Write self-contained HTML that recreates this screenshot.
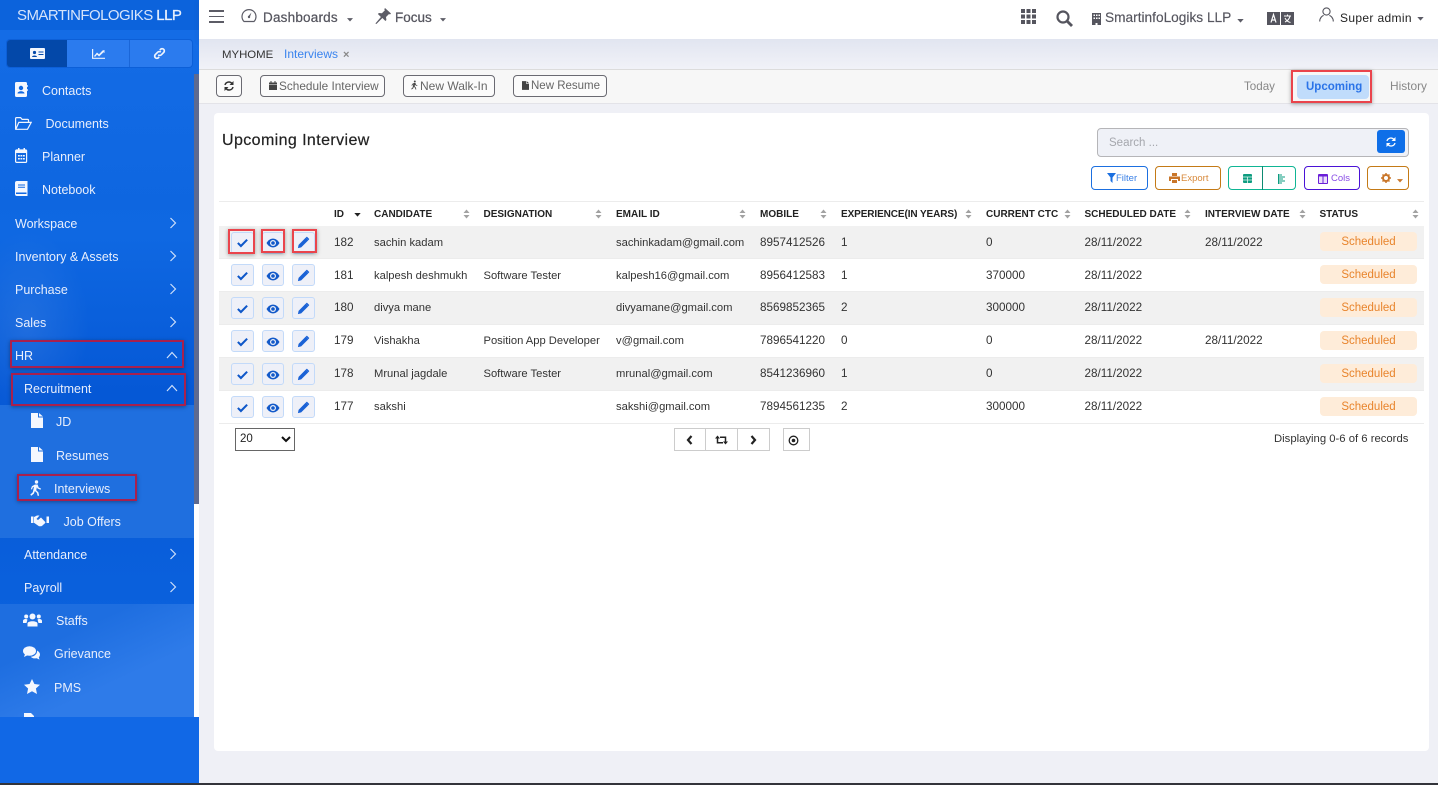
<!DOCTYPE html>
<html><head><meta charset="utf-8"><title>Interviews</title>
<style>
html,body{margin:0;padding:0;width:1438px;height:785px;overflow:hidden;background:#eff0f6;font-family:"Liberation Sans",sans-serif;color:#333}
*{box-sizing:border-box}
.a{position:absolute}
.t{position:absolute;white-space:nowrap;line-height:14px;font-size:12px}
.s{color:#e8eefc;font-size:12.5px}
.s2{color:#e8eefc;font-size:12.5px}
svg{position:absolute;display:block}
.red{position:absolute;border:2px solid #a8204e;box-shadow:0 1px 4px rgba(0,0,0,.35)}
.red2{position:absolute;border:2px solid #ea444c;box-shadow:0 1px 4px rgba(0,0,0,.35)}
.tb{position:absolute;top:75px;height:22px;border:1px solid #6a6a72;border-radius:4px;background:#fbfbfb;color:#666;font-size:11.8px;line-height:20px;white-space:nowrap}
.th{position:absolute;top:209px;font-size:10px;font-weight:bold;color:#222;line-height:12px;white-space:nowrap}
.b{position:absolute;width:23px;height:22px;background:#eef0f8;border:1px solid #c3daf9;border-radius:3px}
.bd{position:absolute;left:1320px;width:97px;height:19px;background:#feecd9;border-radius:4px;color:#e8842c;font-size:11.5px;line-height:21px;text-align:center}
.row{position:absolute;left:219px;width:1205px;height:33px;border-bottom:1px solid #ececec}
.g{background:#f1f1f1}
.c{position:absolute;font-size:11.2px;color:#333;line-height:16px;white-space:nowrap}
.n{position:absolute;font-size:11.7px;color:#333;line-height:16px;white-space:nowrap}
.tl{position:absolute;top:166px;height:24px;border-radius:4px;background:#fff;font-size:9.5px;line-height:24px;white-space:nowrap}
</style></head><body>
<svg width="0" height="0" style="position:absolute"><defs>
<symbol id="check" viewBox="0 0 14 14"><path d="M2 7.5l3.3 3.3L12 4" fill="none" stroke="#0e57c9" stroke-width="2.2"/></symbol>
<symbol id="eye" viewBox="0 0 14 14"><path d="M0.5 7C2.500 3.700 4.700 2.600 7 2.600S11.500 3.700 13.500 7C11.500 10.300 9.300 11.400 7 11.400S2.500 10.300 0.500 7Z" fill="#1259c9"/><circle cx="7" cy="7" r="3" fill="#eef0f8"/><circle cx="7" cy="7" r="1.800" fill="#1259c9"/></symbol>
<symbol id="pen" viewBox="0 0 14 14"><path d="M1 13l.7-3.500L9.400 1.800l2.800 2.800-7.700 7.700zM10.200 1l.6-.2 2.400 2.400-.3.700-.6.600-2.800-2.800z" fill="#1a62d6"/></symbol>
<symbol id="sort" viewBox="0 0 7 10"><path d="M3.500 0.500L6.500 4H.5zM3.500 9.500L.5 6h6z" fill="#a2a2a2"/></symbol>
<symbol id="chev" viewBox="0 0 8 12"><path d="M1.500 1l5 5-5 5" fill="none" stroke="#cfe0fa" stroke-width="1.200"/></symbol>
<symbol id="up" viewBox="0 0 12 8"><path d="M1 7l5-5.500L11 7" fill="none" stroke="#cfe0fa" stroke-width="1.200"/></symbol>
<symbol id="file" viewBox="0 0 12 15"><path d="M0 0h7v4.500h5V15H0zM8 0l4 3.500H8z" fill="#f4f7fe"/></symbol>
<symbol id="walk" viewBox="0 0 12 16"><circle cx="6.500" cy="2" r="1.700" fill="#f4f7fe"/><path d="M5 4.500h2.600l1.100 3 2.300 1-.5 1.200-3-1.200-.6-1.300-.7 3 2.200 2.200.7 3.400H7.600l-.6-2.800-2.100-2-1.100 2.700L1.200 15.700.300 14.600l2.500-2.400L4 6.800l-1.200.6-.8 2.100-1.100-.4 1-2.800z" fill="#f4f7fe"/></symbol>
<symbol id="walkd" viewBox="0 0 12 16"><circle cx="6.500" cy="2" r="1.700" fill="#444"/><path d="M5 4.500h2.600l1.100 3 2.300 1-.5 1.200-3-1.200-.6-1.300-.7 3 2.200 2.200.7 3.400H7.600l-.6-2.800-2.100-2-1.100 2.700L1.200 15.700.300 14.600l2.500-2.400L4 6.800l-1.200.6-.8 2.100-1.100-.4 1-2.800z" fill="#444"/></symbol>
<symbol id="caret" viewBox="0 0 8 5"><path d="M0 0h8L4 4.500z" fill="#5c5c66"/></symbol>
</defs></svg>

<!-- Sidebar -->
<div class="a" style="left:0;top:0;width:199px;height:785px;background:linear-gradient(180deg,#0a62dc 0%,#0f68e2 30%,#0558d6 50%,#0a60dc 75%,#126ae6 100%);overflow:hidden">
  <div class="a" style="left:0;top:0;width:199px;height:30px;background:#0c63dc"></div>
  <div class="a" style="left:0;top:30px;width:199px;height:180px;background:linear-gradient(180deg,#146ce6,#0e66e0)"></div>
  <div class="a" style="left:0;top:230px;width:90px;height:175px;background:radial-gradient(ellipse at 30% 55%,rgba(255,255,255,.09),rgba(255,255,255,0) 70%)"></div>
  <div class="a" style="left:0;top:405px;width:194px;height:133px;background:#1f6fdf"></div>
  <div class="a" style="left:0;top:604px;width:194px;height:113px;background:linear-gradient(155deg,#1e6ee0 30%,#2e7be9 65%)"></div>
  <div class="a" style="left:194px;top:74px;width:5px;height:430px;background:#5e6a90"></div>
  <div class="a" style="left:194px;top:504px;width:5px;height:213px;background:#fff"></div>
  <div class="a" style="left:0;top:717px;width:199px;height:66px;background:#1168e6"></div>
</div>
<div class="t" style="left:17px;top:7px;font-size:15px;line-height:17px;color:#d6e4fb;letter-spacing:-.55px">SMARTINFOLOGIKS <b style="color:#e8f0fd;font-weight:normal;-webkit-text-stroke:.3px #e8f0fd">LLP</b></div>

<div class="a" style="left:6px;top:39px;width:187px;height:29px;background:#2b7bee;border:1px solid #0c5fd8;border-radius:4px"></div>
<div class="a" style="left:7px;top:40px;width:60px;height:27px;background:#0348a9;border-radius:3px 0 0 3px"></div>
<div class="a" style="left:129px;top:40px;width:1px;height:27px;background:#1a66d8"></div>
<svg style="left:30px;top:48px" width="15" height="12" viewBox="0 0 15 12"><rect width="15" height="11" rx="1" fill="#f2f6fd"/><circle cx="4.500" cy="4.500" r="1.600" fill="#0348a9"/><path d="M2 9c0-2 5-2 5 0zM8.500 3.500h5v1h-5zM8.500 6h5v1h-5z" fill="#0348a9"/></svg>
<svg style="left:92px;top:49px" width="13" height="10" viewBox="0 0 13 10"><path d="M.6 0v9.300H13" fill="none" stroke="#eaf1fd" stroke-width="1.200"/><path d="M2 7l3-3.500 2 1.800L10.500 1.500 12.500 1v3l-1-.8L7.100 7.500 5 5.600 3 8z" fill="#eaf1fd"/></svg>
<svg style="left:153px;top:47px" width="13" height="13" viewBox="0 0 13 13"><path d="M5.200 7.800a2.200 2.200 0 0 0 3.100 0l2.500-2.500a2.200 2.200 0 0 0-3.100-3.100L6.800 3.100M7.800 5.200a2.200 2.200 0 0 0-3.100 0L2.200 7.700a2.200 2.200 0 0 0 3.100 3.100l.9-.9" fill="none" stroke="#eef4fe" stroke-width="1.700"/></svg>

<svg style="left:15px;top:82px" width="13" height="15" viewBox="0 0 13 15"><rect width="12" height="15" rx="1.500" fill="#f4f7fe"/><circle cx="6" cy="6" r="2.200" fill="#1168e2"/><path d="M2.500 11.500c0-3 7-3 7 0z" fill="#1168e2"/><path d="M12.300 3h.7v2h-.7zM12.300 7h.7v2h-.7z" fill="#f4f7fe"/></svg>
<div class="t s" style="left:42px;top:84px">Contacts</div>
<svg style="left:15px;top:117px" width="17" height="13" viewBox="0 0 17 13"><path d="M.6 12V1.600q0-1 1-1h4l1.500 1.800h5.400q1 0 1 1V5M.8 12.300h11.700L16.200 5.400H3.800z" fill="none" stroke="#f0f4fd" stroke-width="1.200"/></svg>
<div class="t s" style="left:45.500px;top:117px">Documents</div>
<svg style="left:15px;top:148px" width="13" height="15" viewBox="0 0 13 15"><path d="M3 0h1.500v2H3zM8.500 0H10v2H8.500z" fill="#f4f7fe"/><rect x=".6" y="2" width="11" height="12.400" rx="1" fill="none" stroke="#f4f7fe" stroke-width="1.200"/><path d="M.6 2h11v3H.6zM3 7h1.800v1.500H3zM5.500 7h1.800v1.500H5.500zM8 7h1.800v1.500H8zM3 10h1.800v1.500H3zM5.500 10h1.800v1.500H5.500zM8 10h1.800v1.500H8z" fill="#f4f7fe"/></svg>
<div class="t s" style="left:42px;top:150px">Planner</div>
<svg style="left:15px;top:181px" width="13" height="15" viewBox="0 0 13 15"><path d="M2 0h10.500v15H2a2 2 0 0 1-2-2V2a2 2 0 0 1 2-2z" fill="#f4f7fe"/><path d="M3 3.500h7v1H3zM3 5.800h7v1H3zM1 11.500h10.500v1.500H1z" fill="#1168e2"/></svg>
<div class="t s" style="left:42px;top:183px">Notebook</div>

<div class="t s" style="left:15px;top:217px">Workspace</div><svg style="left:169px;top:217px" width="8" height="12"><use href="#chev"/></svg>
<div class="t s" style="left:15px;top:250px">Inventory &amp; Assets</div><svg style="left:169px;top:250px" width="8" height="12"><use href="#chev"/></svg>
<div class="t s" style="left:15px;top:283px">Purchase</div><svg style="left:169px;top:283px" width="8" height="12"><use href="#chev"/></svg>
<div class="t s" style="left:15px;top:316px">Sales</div><svg style="left:169px;top:316px" width="8" height="12"><use href="#chev"/></svg>
<div class="red" style="left:10px;top:340px;width:174px;height:28px"></div>
<div class="t s" style="left:15px;top:349px">HR</div><svg style="left:166px;top:351px" width="12" height="8"><use href="#up"/></svg>
<div class="red" style="left:11px;top:373px;width:175px;height:33px"></div>
<div class="t s" style="left:24px;top:382px">Recruitment</div><svg style="left:166px;top:384px" width="12" height="8"><use href="#up"/></svg>
<svg style="left:31px;top:413px" width="12" height="15"><use href="#file"/></svg>
<div class="t s2" style="left:56px;top:415px">JD</div>
<svg style="left:31px;top:447px" width="12" height="15"><use href="#file"/></svg>
<div class="t s2" style="left:56px;top:449px">Resumes</div>
<div class="red" style="left:17px;top:474px;width:120px;height:27px"></div>
<svg style="left:30px;top:480px" width="12" height="16"><use href="#walk"/></svg>
<div class="t s2" style="left:54px;top:482px">Interviews</div>
<svg style="left:31px;top:514px" width="18" height="13" viewBox="0 0 18 13"><path d="M0 2.500h2.500v6.500H0zM15.500 2.500H18v6.500h-2.500zM3 3l3-1.500h2.500L5.500 5 7 6l3-2.500 4.500 4.700-1 1.500-1 .8-1 1-1.200.8H8L3 8.800z" fill="#f4f7fe"/></svg>
<div class="t s2" style="left:63.500px;top:515px">Job Offers</div>
<div class="t s" style="left:24px;top:548px">Attendance</div><svg style="left:169px;top:548px" width="8" height="12"><use href="#chev"/></svg>
<div class="t s" style="left:24px;top:581px">Payroll</div><svg style="left:169px;top:581px" width="8" height="12"><use href="#chev"/></svg>
<svg style="left:23px;top:613px" width="19" height="14" viewBox="0 0 19 14"><circle cx="9.500" cy="3.500" r="3" fill="#f4f7fe"/><circle cx="3.200" cy="3.500" r="2" fill="#f4f7fe"/><circle cx="15.800" cy="3.500" r="2" fill="#f4f7fe"/><path d="M4.500 13.500v-3c0-3 10-3 10 0v3zM0 10V8c0-2 3-2.500 4.500-1.500L3.500 10zM19 10V8c0-2-3-2.500-4.500-1.500l1 3.500z" fill="#f4f7fe"/></svg>
<div class="t s2" style="left:56px;top:614px">Staffs</div>
<svg style="left:23px;top:646px" width="17" height="14" viewBox="0 0 17 14"><ellipse cx="6.500" cy="5" rx="6.500" ry="4.800" fill="#f4f7fe"/><path d="M2 8l-1 3 3.500-1.700z" fill="#f4f7fe"/><path d="M14 4.500c2 1 3 2.500 3 4 0 1.200-.5 2-1.200 2.800l.7 2.300-2.800-1.400c-2.500.6-4.500 0-6-1.500 3.500 0 7-2.800 6.300-6.700z" fill="#f4f7fe"/></svg>
<div class="t s2" style="left:54px;top:647px">Grievance</div>
<svg style="left:24px;top:679px" width="16" height="15" viewBox="0 0 16 15"><path d="M8 0l2.400 5 5.600.7-4.100 3.800 1.100 5.500L8 12.300 3 15l1.100-5.500L0 5.700 5.600 5z" fill="#f4f7fe"/></svg>
<div class="t s2" style="left:54px;top:681px">PMS</div>
<svg style="left:24px;top:713px" width="12" height="4" viewBox="0 0 12 4"><path d="M0 0h7l3 3v1H0z" fill="#f4f7fe"/></svg>

<!-- Top bar -->
<div class="a" style="left:199px;top:0;width:1239px;height:39px;background:#fff;box-shadow:0 2px 5px rgba(60,70,110,.18)"></div>
<div class="a" style="left:209px;top:10px;width:15px;height:1.500px;background:#5c5c66"></div>
<div class="a" style="left:209px;top:15.500px;width:15px;height:1.500px;background:#5c5c66"></div>
<div class="a" style="left:209px;top:21px;width:15px;height:1.500px;background:#5c5c66"></div>
<svg style="left:241px;top:8px" width="16" height="15" viewBox="0 0 16 15"><path d="M3 13.500h10a7 7 0 1 0-10 0z" fill="none" stroke="#5c5c66" stroke-width="1.200"/><path d="M7 8.500L10.500 4.500 8.700 9.500z" fill="#5c5c66"/><circle cx="8" cy="9" r="1.200" fill="#5c5c66"/></svg>
<div class="t" style="left:263px;top:11px;font-size:13.500px;color:#56565f;letter-spacing:.2px;-webkit-text-stroke:.25px #56565f">Dashboards</div>
<svg style="left:347px;top:18px" width="6" height="4"><use href="#caret"/></svg>
<svg style="left:375px;top:8px" width="16" height="16" viewBox="0 0 16 16"><path d="M10 0l6 5.500-1 1-1-.5-3 3 .4 3-1 1-3-3-6 6-1-.5 5.500-6.500-3-3 1-1 3 .3 3-3-.6-1z" fill="#5c5c66"/></svg>
<div class="t" style="left:395px;top:11px;font-size:13.500px;color:#56565f;-webkit-text-stroke:.25px #56565f">Focus</div>
<svg style="left:440px;top:18px" width="6" height="4"><use href="#caret"/></svg>

<svg style="left:1021px;top:9px" width="15" height="15" viewBox="0 0 15 15"><path d="M0 0h4v4H0zM5.500 0h4v4h-4zM11 0h4v4h-4zM0 5.500h4v4H0zM5.500 5.500h4v4h-4zM11 5.500h4v4h-4zM0 11h4v4H0zM5.500 11h4v4h-4zM11 11h4v4h-4z" fill="#55555e"/></svg>
<svg style="left:1056px;top:10px" width="17" height="17" viewBox="0 0 17 17"><circle cx="7" cy="7" r="5.500" fill="none" stroke="#55555e" stroke-width="2.200"/><path d="M11 11l5 5" stroke="#55555e" stroke-width="2.800"/></svg>
<svg style="left:1092px;top:13px" width="9" height="12" viewBox="0 0 9 12"><path d="M0 0h9v12H5.500v-2h-2v2H0z" fill="#55555e"/><path d="M1.500 1.500h1.500v1.500H1.500zM4 1.500h1.500v1.500H4zM6.500 1.500H8v1.500H6.500zM1.500 4.500h1.500v1.500H1.500zM4 4.500h1.500v1.500H4zM6.500 4.500H8v1.500H6.500z" fill="#fff"/></svg>
<div class="t" style="left:1105px;top:11px;font-size:13.700px;color:#56565f;-webkit-text-stroke:.15px #56565f">SmartinfoLogiks LLP</div>
<svg style="left:1237px;top:19px" width="7" height="4"><use href="#caret"/></svg>
<svg style="left:1267px;top:12px" width="27" height="13" viewBox="0 0 27 13"><rect width="13" height="13" fill="#55555e"/><rect x="14" width="13" height="13" fill="#55555e"/><path d="M4 10.500L6.500 2.500 9 10.500M5 8h3" fill="none" stroke="#fff" stroke-width="1.200"/><path d="M17 4h7M20.500 2.500v1.500M23 4c-.5 3-3 5-5 6M18 6c1 2 3 4 5.500 4.500" fill="none" stroke="#fff" stroke-width="1"/></svg>
<svg style="left:1319px;top:7px" width="15" height="15" viewBox="0 0 15 15"><circle cx="7.500" cy="4.500" r="3.600" fill="none" stroke="#55555e" stroke-width="1.100"/><path d="M.7 14.500c0-4 3-6 4-6M14.300 14.500c0-4-3-6-4-6" fill="none" stroke="#55555e" stroke-width="1.100"/></svg>
<div class="t" style="left:1340px;top:11px;font-size:12px;color:#222;letter-spacing:.35px">Super admin</div>
<svg style="left:1417px;top:17px" width="7" height="4"><use href="#caret"/></svg>

<!-- Tab strip -->
<div class="a" style="left:199px;top:39px;width:1239px;height:31px;background:linear-gradient(180deg,#e1e5f0,#f1f2f8);border-bottom:1px solid #dcdcdc"></div>
<div class="t" style="left:222px;top:48px;font-size:11.400px;color:#333">MYHOME</div>
<div class="t" style="left:284px;top:47px;font-size:12px;color:#3a84ee">Interviews</div>
<div class="t" style="left:343px;top:48px;font-size:11px;color:#888;font-weight:bold">×</div>

<!-- Toolbar -->
<div class="a" style="left:199px;top:70px;width:1239px;height:34px;background:#f7f7f7;border-bottom:1px solid #e3e3e8"></div>
<div class="tb" style="left:216px;width:26px"></div>
<svg style="left:224px;top:81px" width="10" height="10" viewBox="0 0 10 10"><path d="M1 4a4 4 0 0 1 7-1.500M9 6a4 4 0 0 1-7 1.500" fill="none" stroke="#333" stroke-width="1.500"/><path d="M9.500 0v4h-4zM.5 10V6h4z" fill="#333"/></svg>
<div class="tb" style="left:260px;width:125px;padding-left:18px">Schedule Interview</div>
<svg style="left:269px;top:81px" width="8" height="9" viewBox="0 0 8 9"><path d="M1.500 0h1v1.500h3V0h1v1.500H8V3H0V1.500h1.500zM0 3.500h8V9H0z" fill="#444"/></svg>
<div class="tb" style="left:403px;width:92px;padding-left:16px;font-size:12px">New Walk-In</div>
<svg style="left:411px;top:80px" width="7" height="10"><use href="#walkd"/></svg>
<div class="tb" style="left:513px;width:94px;padding-left:17px;font-size:11.500px">New Resume</div>
<svg style="left:522px;top:81px" width="7" height="9" viewBox="0 0 12 15"><path d="M0 0h7v4.500h5V15H0zM8 0l4 3.500H8z" fill="#444"/></svg>
<div class="t" style="left:1244px;top:80px;font-size:11.600px;color:#888">Today</div>
<div class="a" style="left:1297px;top:75px;width:72px;height:24px;background:#c0dcfb;border-radius:4px"></div>
<div class="red2" style="left:1291px;top:70px;width:81px;height:33px"></div>
<div class="t" style="left:1306px;top:80px;font-size:11.500px;font-weight:bold;color:#2a73e8">Upcoming</div>
<div class="t" style="left:1390px;top:79px;font-size:11.900px;color:#888">History</div>

<!-- Card -->
<div class="a" style="left:214px;top:113px;width:1215px;height:638px;background:#fff;border-radius:4px"></div>
<div class="t" style="left:222px;top:132px;font-size:16px;line-height:18px;color:#222;letter-spacing:.4px;-webkit-text-stroke:.2px #222">Upcoming Interview</div>
<div class="a" style="left:1097px;top:128px;width:312px;height:29px;background:#eff1f7;border:1px solid #b5b5b8;border-radius:4px"></div>
<div class="t" style="left:1109px;top:136px;font-size:11.500px;color:#a5a7ad">Search ...</div>
<div class="a" style="left:1377px;top:130px;width:28px;height:23px;background:#0f6fe8;border-radius:3px"></div>
<svg style="left:1386px;top:137px" width="10" height="10" viewBox="0 0 10 10"><path d="M1 4a4 4 0 0 1 7-1.500M9 6a4 4 0 0 1-7 1.500" fill="none" stroke="#fff" stroke-width="1.300"/><path d="M9.500 0v4h-4zM.5 10V6h4z" fill="#fff"/></svg>

<div class="tl" style="left:1091px;width:57px;border:1px solid #1b6fe0;color:#3a80e6;padding-left:24px">Filter</div>
<svg style="left:1107px;top:173px" width="9" height="10" viewBox="0 0 9 10"><path d="M0 0h9L5.500 4.500V10L3.500 8V4.500z" fill="#1b6fe0"/></svg>
<div class="tl" style="left:1155px;width:66px;border:1px solid #c47a16;color:#d88a3c;padding-left:25px">Export</div>
<svg style="left:1169px;top:173px" width="11" height="10" viewBox="0 0 11 10"><path d="M3 0h5v3H3zM0 3.500h11V8H9V6H2v2H0zM3 7h5v3H3z" fill="#c9762a"/></svg>
<div class="tl" style="left:1228px;width:68px;border:1px solid #0fb594"></div>
<div class="a" style="left:1262px;top:166px;width:1px;height:24px;background:#0d8a72"></div>
<svg style="left:1243px;top:174px" width="9" height="9" viewBox="0 0 9 9"><rect width="9" height="9" rx="1" fill="#0e9c80"/><path d="M0 3h9M4.500 3v6M0 6h9" stroke="#e4f5f1" stroke-width=".8"/></svg>
<svg style="left:1278px;top:174px" width="8" height="10" viewBox="0 0 8 10"><path d="M.5 0v10M1 1h3M1 3h6M1 5h4M1 7h6M1 9h3" stroke="#0e9c80" stroke-width="1" fill="none"/></svg>
<div class="tl" style="left:1304px;width:56px;border:1px solid #4a12d6;color:#8a4ee6;padding-left:26px">Cols</div>
<svg style="left:1318px;top:174px" width="10" height="10" viewBox="0 0 10 10"><rect width="10" height="10" rx="1" fill="#6a1fd8"/><path d="M1 2.500h3.500V9H1zM5.500 2.500H9V9H5.500z" fill="#eadffb"/></svg>
<div class="tl" style="left:1367px;width:42px;border:1px solid #c47a16"></div>
<svg style="left:1381px;top:173px" width="10" height="10" viewBox="0 0 10 10"><circle cx="5" cy="5" r="3" fill="none" stroke="#c9762a" stroke-width="2"/><path d="M5 0v2M5 8v2M0 5h2M8 5h2M1.500 1.500l1.400 1.400M7.100 7.100l1.400 1.400M1.500 8.500l1.400-1.400M7.100 2.900l1.400-1.400" stroke="#c9762a" stroke-width="1.500"/></svg>
<svg style="left:1397px;top:179px" width="6" height="4" viewBox="0 0 8 5"><path d="M0 0h8L4 4.500z" fill="#c9762a"/></svg>

<!-- Table -->
<div class="a" style="left:219px;top:201px;width:1205px;height:1px;background:#ececec"></div>
<div class="th" style="left:334px">ID</div><svg style="left:354px;top:213px" width="7" height="4" viewBox="0 0 8 5"><path d="M0 0h8L4 4.500z" fill="#222"/></svg>
<div class="th" style="left:374px">CANDIDATE</div><svg style="left:463px;top:209px" width="7" height="10"><use href="#sort"/></svg>
<div class="th" style="left:483.500px">DESIGNATION</div><svg style="left:595px;top:209px" width="7" height="10"><use href="#sort"/></svg>
<div class="th" style="left:616px">EMAIL ID</div><svg style="left:739px;top:209px" width="7" height="10"><use href="#sort"/></svg>
<div class="th" style="left:760px">MOBILE</div><svg style="left:820px;top:209px" width="7" height="10"><use href="#sort"/></svg>
<div class="th" style="left:841px;letter-spacing:-.1px">EXPERIENCE(IN YEARS)</div><svg style="left:965px;top:209px" width="7" height="10"><use href="#sort"/></svg>
<div class="th" style="left:986px">CURRENT CTC</div><svg style="left:1064px;top:209px" width="7" height="10"><use href="#sort"/></svg>
<div class="th" style="left:1084.500px">SCHEDULED DATE</div><svg style="left:1184px;top:209px" width="7" height="10"><use href="#sort"/></svg>
<div class="th" style="left:1205px">INTERVIEW DATE</div><svg style="left:1299px;top:209px" width="7" height="10"><use href="#sort"/></svg>
<div class="th" style="left:1319.500px">STATUS</div><svg style="left:1412px;top:209px" width="7" height="10"><use href="#sort"/></svg>

<div class="row g" style="top:226px"></div>
<div class="row" style="top:259px"></div>
<div class="row g" style="top:292px"></div>
<div class="row" style="top:325px"></div>
<div class="row g" style="top:358px"></div>
<div class="row" style="top:391px"></div>

<!-- Row 182 -->
<div class="b" style="left:231px;top:232px"></div><svg style="left:236px;top:236px" width="13" height="13"><use href="#check"/></svg>
<div class="b" style="left:262px;top:232px;width:22px"></div><svg style="left:266px;top:236px" width="14" height="14"><use href="#eye"/></svg>
<div class="b" style="left:292px;top:232px"></div><svg style="left:297px;top:236px" width="13" height="13"><use href="#pen"/></svg>
<div class="red2" style="left:228px;top:229px;width:27px;height:25px"></div>
<div class="red2" style="left:261px;top:229px;width:24px;height:24px"></div>
<div class="red2" style="left:292px;top:229px;width:25px;height:24px"></div>
<div class="n" style="left:334px;top:235px">182</div><div class="c" style="left:374px;top:235px">sachin kadam</div><div class="c" style="left:616px;top:235px">sachinkadam@gmail.com</div><div class="n" style="left:760px;top:235px">8957412526</div><div class="n" style="left:841px;top:235px">1</div><div class="n" style="left:986px;top:235px">0</div><div class="n" style="left:1084.500px;top:235px">28/11/2022</div><div class="n" style="left:1205px;top:235px">28/11/2022</div><div class="bd" style="top:232px">Scheduled</div>

<!-- Row 181 -->
<div class="b" style="left:231px;top:264px"></div><svg style="left:236px;top:269px" width="13" height="13"><use href="#check"/></svg>
<div class="b" style="left:262px;top:264px;width:22px"></div><svg style="left:266px;top:269px" width="14" height="14"><use href="#eye"/></svg>
<div class="b" style="left:292px;top:264px"></div><svg style="left:297px;top:269px" width="13" height="13"><use href="#pen"/></svg>
<div class="n" style="left:334px;top:268px">181</div><div class="c" style="left:374px;top:268px">kalpesh deshmukh</div><div class="c" style="left:483.500px;top:268px">Software Tester</div><div class="c" style="left:616px;top:268px">kalpesh16@gmail.com</div><div class="n" style="left:760px;top:268px">8956412583</div><div class="n" style="left:841px;top:268px">1</div><div class="n" style="left:986px;top:268px">370000</div><div class="n" style="left:1084.500px;top:268px">28/11/2022</div><div class="bd" style="top:265px">Scheduled</div>

<!-- Row 180 -->
<div class="b" style="left:231px;top:297px"></div><svg style="left:236px;top:302px" width="13" height="13"><use href="#check"/></svg>
<div class="b" style="left:262px;top:297px;width:22px"></div><svg style="left:266px;top:302px" width="14" height="14"><use href="#eye"/></svg>
<div class="b" style="left:292px;top:297px"></div><svg style="left:297px;top:302px" width="13" height="13"><use href="#pen"/></svg>
<div class="n" style="left:334px;top:300px">180</div><div class="c" style="left:374px;top:300px">divya mane</div><div class="c" style="left:616px;top:300px">divyamane@gmail.com</div><div class="n" style="left:760px;top:300px">8569852365</div><div class="n" style="left:841px;top:300px">2</div><div class="n" style="left:986px;top:300px">300000</div><div class="n" style="left:1084.500px;top:300px">28/11/2022</div><div class="bd" style="top:298px">Scheduled</div>

<!-- Row 179 -->
<div class="b" style="left:231px;top:330px"></div><svg style="left:236px;top:335px" width="13" height="13"><use href="#check"/></svg>
<div class="b" style="left:262px;top:330px;width:22px"></div><svg style="left:266px;top:335px" width="14" height="14"><use href="#eye"/></svg>
<div class="b" style="left:292px;top:330px"></div><svg style="left:297px;top:335px" width="13" height="13"><use href="#pen"/></svg>
<div class="n" style="left:334px;top:333px">179</div><div class="c" style="left:374px;top:333px">Vishakha</div><div class="c" style="left:483.500px;top:333px">Position App Developer</div><div class="c" style="left:616px;top:333px">v@gmail.com</div><div class="n" style="left:760px;top:333px">7896541220</div><div class="n" style="left:841px;top:333px">0</div><div class="n" style="left:986px;top:333px">0</div><div class="n" style="left:1084.500px;top:333px">28/11/2022</div><div class="n" style="left:1205px;top:333px">28/11/2022</div><div class="bd" style="top:331px">Scheduled</div>

<!-- Row 178 -->
<div class="b" style="left:231px;top:363px"></div><svg style="left:236px;top:368px" width="13" height="13"><use href="#check"/></svg>
<div class="b" style="left:262px;top:363px;width:22px"></div><svg style="left:266px;top:368px" width="14" height="14"><use href="#eye"/></svg>
<div class="b" style="left:292px;top:363px"></div><svg style="left:297px;top:368px" width="13" height="13"><use href="#pen"/></svg>
<div class="n" style="left:334px;top:366px">178</div><div class="c" style="left:374px;top:366px">Mrunal jagdale</div><div class="c" style="left:483.500px;top:366px">Software Tester</div><div class="c" style="left:616px;top:366px">mrunal@gmail.com</div><div class="n" style="left:760px;top:366px">8541236960</div><div class="n" style="left:841px;top:366px">1</div><div class="n" style="left:986px;top:366px">0</div><div class="n" style="left:1084.500px;top:366px">28/11/2022</div><div class="bd" style="top:364px">Scheduled</div>

<!-- Row 177 -->
<div class="b" style="left:231px;top:396px"></div><svg style="left:236px;top:401px" width="13" height="13"><use href="#check"/></svg>
<div class="b" style="left:262px;top:396px;width:22px"></div><svg style="left:266px;top:401px" width="14" height="14"><use href="#eye"/></svg>
<div class="b" style="left:292px;top:396px"></div><svg style="left:297px;top:401px" width="13" height="13"><use href="#pen"/></svg>
<div class="n" style="left:334px;top:399px">177</div><div class="c" style="left:374px;top:399px">sakshi</div><div class="c" style="left:616px;top:399px">sakshi@gmail.com</div><div class="n" style="left:760px;top:399px">7894561235</div><div class="n" style="left:841px;top:399px">2</div><div class="n" style="left:986px;top:399px">300000</div><div class="n" style="left:1084.500px;top:399px">28/11/2022</div><div class="bd" style="top:397px">Scheduled</div>

<!-- Footer -->
<div class="a" style="left:235px;top:428px;width:60px;height:23px;border:1px solid #666;background:#fff"></div>
<div class="t" style="left:240px;top:432px;font-size:11.500px;color:#222">20</div>
<svg style="left:281px;top:436px" width="10" height="7" viewBox="0 0 10 7"><path d="M1 1l4 4 4-4" fill="none" stroke="#111" stroke-width="2"/></svg>
<div class="a" style="left:674px;top:428px;width:96px;height:23px;border:1px solid #ccc;background:#fff"></div>
<div class="a" style="left:705px;top:428px;width:1px;height:23px;background:#ccc"></div>
<div class="a" style="left:737px;top:428px;width:1px;height:23px;background:#ccc"></div>
<div class="a" style="left:783px;top:428px;width:27px;height:23px;border:1px solid #ccc;background:#fff"></div>
<svg style="left:686px;top:435px" width="7" height="10" viewBox="0 0 7 10"><path d="M5.500 1L2 5l3.500 4" fill="none" stroke="#222" stroke-width="2.200"/></svg>
<svg style="left:715px;top:435px" width="13" height="10" viewBox="0 0 13 10"><path d="M2.500 3v4.800h5.500M10.500 7V2.200H5" fill="none" stroke="#222" stroke-width="1.500"/><path d="M0 3.500L2.500 .5 5 3.500zM8 6.500h5L10.500 9.500z" fill="#222"/></svg>
<svg style="left:750px;top:435px" width="7" height="10" viewBox="0 0 7 10"><path d="M1.500 1L5 5 1.500 9" fill="none" stroke="#222" stroke-width="2.200"/></svg>
<svg style="left:788px;top:435px" width="11" height="11" viewBox="0 0 11 11"><circle cx="5.500" cy="5.500" r="4.300" fill="none" stroke="#222" stroke-width="1.300"/><circle cx="5.500" cy="5.500" r="1.800" fill="#222"/></svg>
<div class="t" style="left:1274px;top:432px;font-size:11.300px;color:#333">Displaying 0-6 of 6 records</div>

<div class="a" style="left:0;top:783px;width:1438px;height:2px;background:#33343a"></div>
</body></html>
